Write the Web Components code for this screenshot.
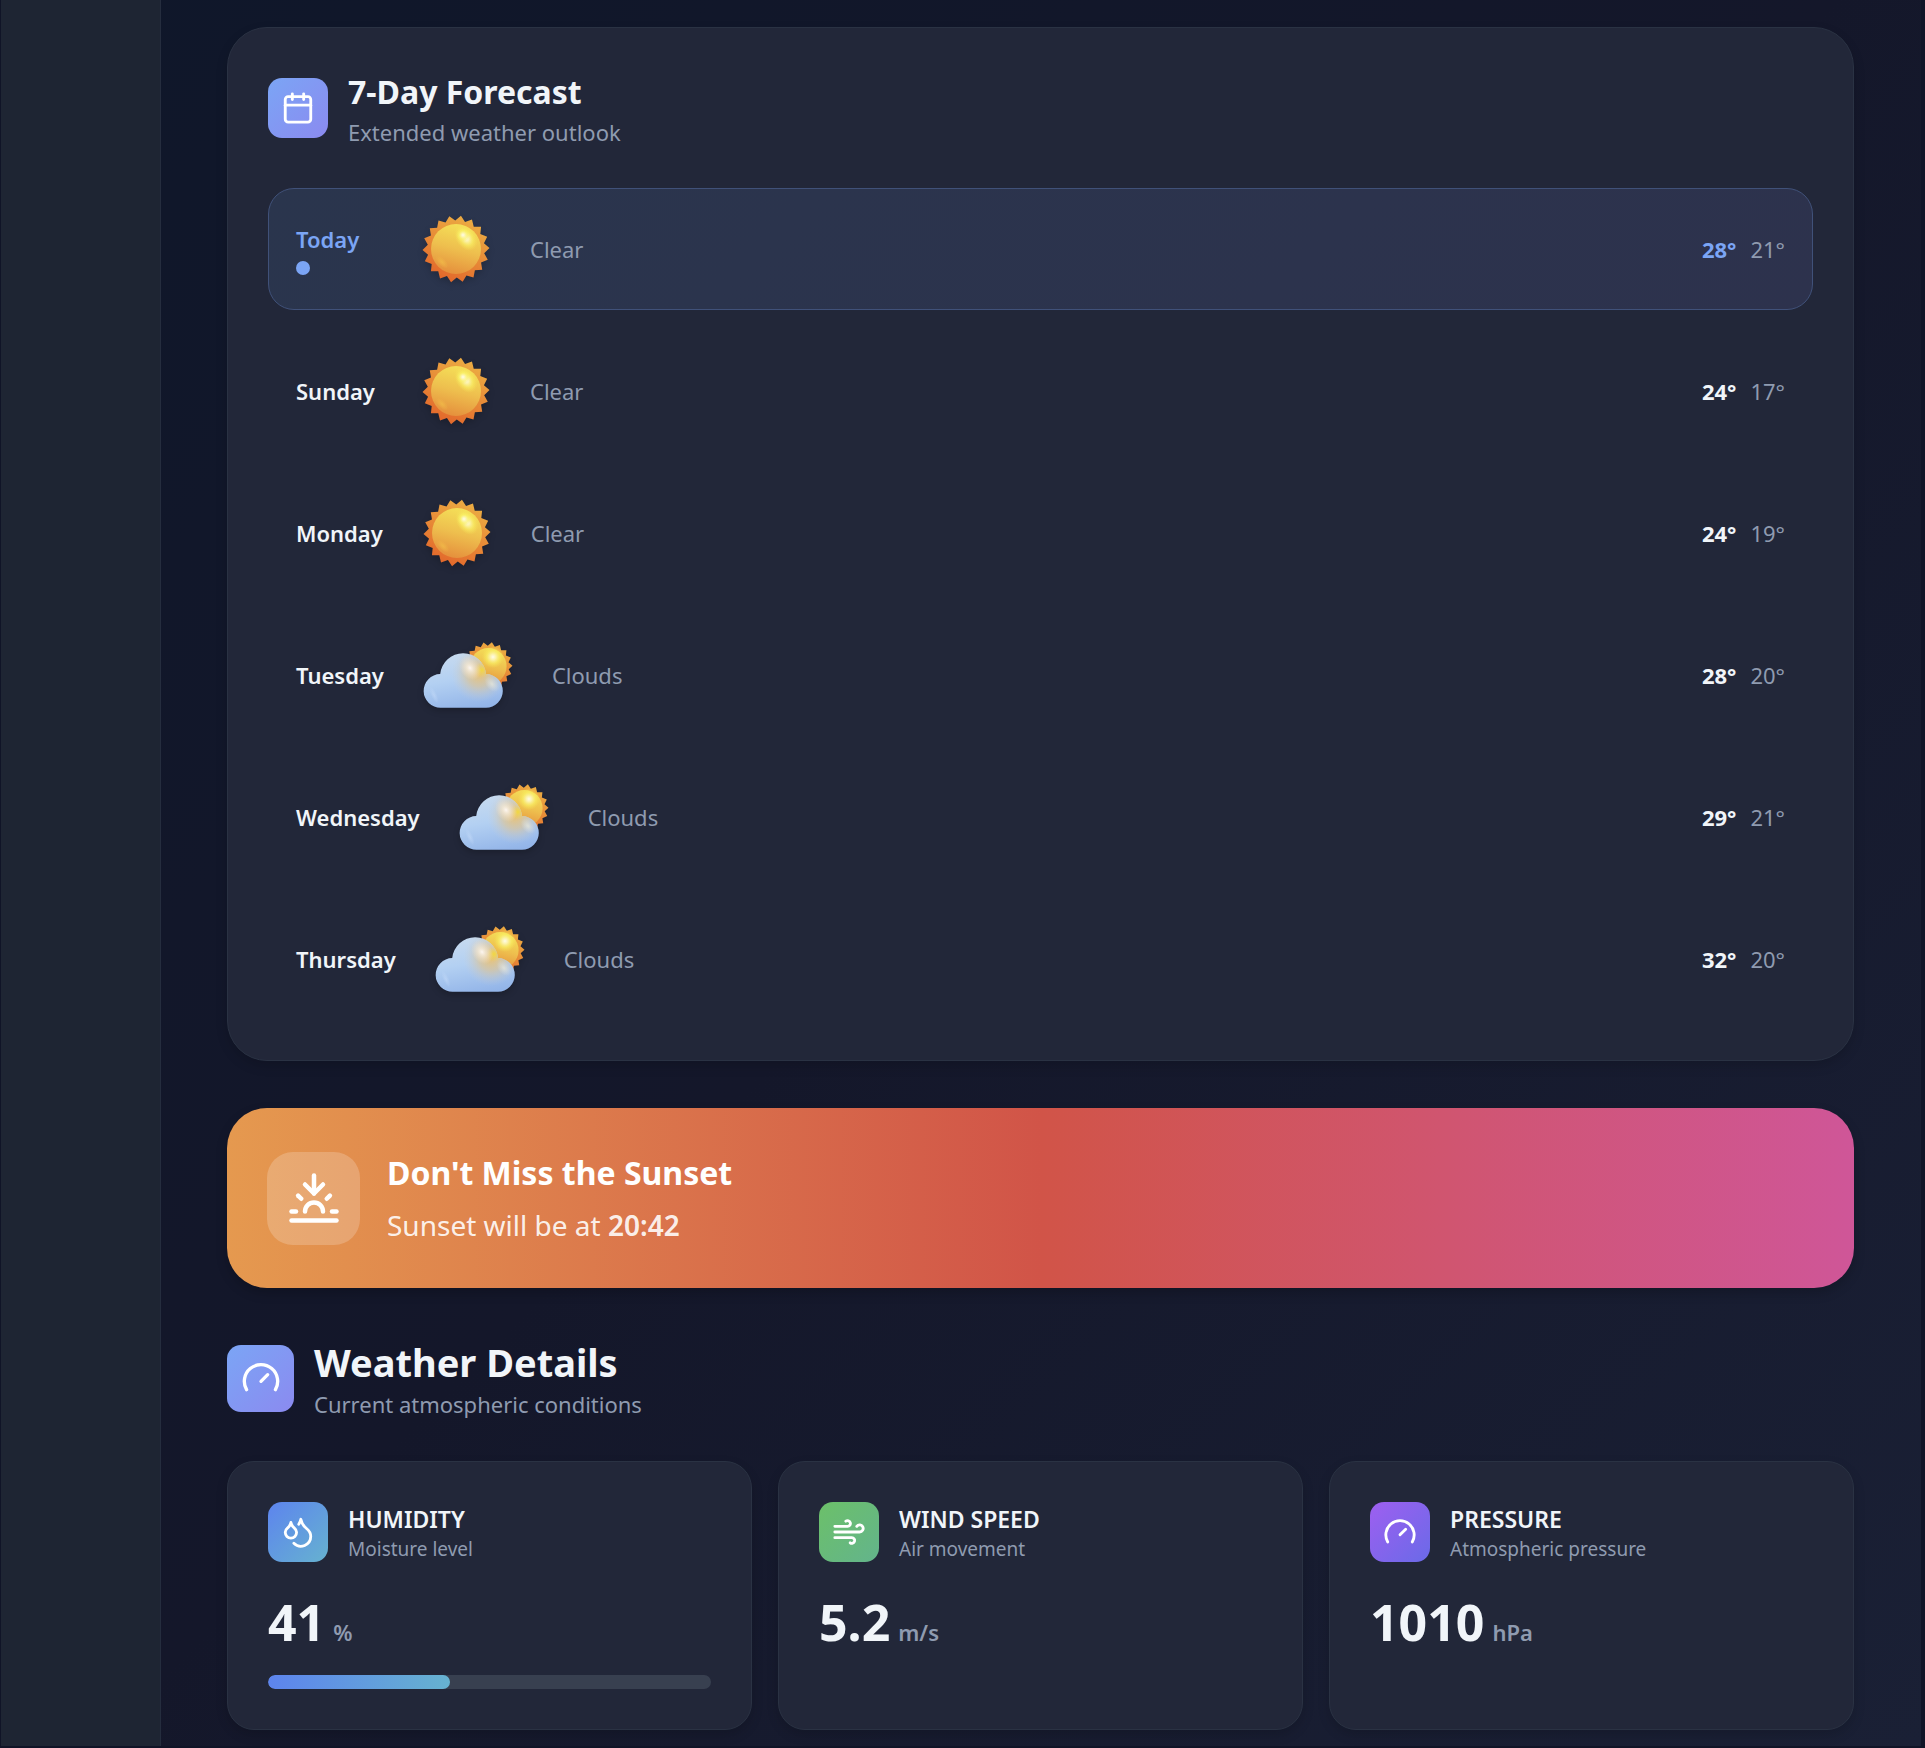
<!DOCTYPE html>
<html lang="en">
<head>
<meta charset="utf-8">
<title>Weather</title>
<style>
  html, body { margin: 0; min-height: 100%; }
  body {
    font-family: "Noto Sans", "Open Sans", sans-serif;
    color: #f1f5f9;
    background: #141829;
  }
</style>
</head>
<body>
<weather-app></weather-app>
<script>
const ICONS = {
  calendar: '<path d="M8 2v4"/><path d="M16 2v4"/><rect width="18" height="18" x="3" y="4" rx="2"/><path d="M3 10h18"/>',
  sunset: '<path d="M12 10V2"/><path d="m4.93 10.93 1.41 1.41"/><path d="M2 18h2"/><path d="M20 18h2"/><path d="m19.07 10.93-1.41 1.41"/><path d="M22 22H2"/><path d="m16 6-4 4-4-4"/><path d="M16 18a4 4 0 0 0-8 0"/>',
  gauge: '<path d="m12 14 4-4"/><path d="M3.34 19a10 10 0 1 1 17.32 0"/>',
  droplets: '<path d="M7 16.3c2.2 0 4-1.83 4-4.05 0-1.16-.57-2.26-1.71-3.19S7.29 6.75 7 5.3c-.29 1.45-1.14 2.84-2.29 3.76S3 11.1 3 12.25c0 2.22 1.8 4.05 4 4.05z"/><path d="M12.56 6.6A10.97 10.97 0 0 0 14 3.02c.5 2.5 2 4.9 4 6.5s3 3.5 3 5.5a6.98 6.98 0 0 1-11.91 4.97"/>',
  wind: '<path d="M12.8 19.6A2 2 0 1 0 14 16H2"/><path d="M17.5 8a2.5 2.5 0 1 1 2 4H2"/><path d="M9.8 4.4A2 2 0 1 1 11 8H2"/>'
};

function define(name, render) {
  customElements.define(name, class extends HTMLElement {
    constructor() {
      super();
      this.attachShadow({ mode: 'open' });
    }
    connectedCallback() {
      this.shadowRoot.innerHTML = render(this);
    }
  });
}

define('line-icon', el => `
  <style>
    :host { display: block; width: var(--glyph, 34px); height: var(--glyph, 34px); }
    svg { display: block; width: 100%; height: 100%; }
  </style>
  <svg viewBox="0 0 24 24" fill="none" stroke="#fff" stroke-width="2" stroke-linecap="round" stroke-linejoin="round" aria-hidden="true">${ICONS[el.getAttribute('name')]}</svg>`);

define('icon-tile', el => `
  <style>
    :host {
      display: flex; align-items: center; justify-content: center; flex: none;
      width: var(--tile, 60px); height: var(--tile, 60px);
      border-radius: var(--tile-radius, 14px);
      background: var(--tile-bg, linear-gradient(135deg, #7ba5f5, #8b8af0));
    }
  </style>
  <line-icon name="${el.getAttribute('name')}"></line-icon>`);

/* Sun outline with eighteen rays, as polygon points. */
function rays(cx, cy, outer, inner) {
  const pts = [];
  for (let i = 0; i < 36; i++) {
    const a = (i * 10 - 1.5) * Math.PI / 180;
    const r = i % 2 ? inner : outer;
    pts.push((cx + r * Math.cos(a)).toFixed(2) + ',' + (cy + r * Math.sin(a)).toFixed(2));
  }
  return pts.join(' ');
}

const SUN_DEFS = `
  <linearGradient id="ray" x1=".75" y1="0" x2=".25" y2="1"><stop offset="0" stop-color="#ecb044"/><stop offset="1" stop-color="#e2642a"/></linearGradient>
  <linearGradient id="disc" x1=".65" y1="0" x2=".4" y2="1"><stop offset="0" stop-color="#f5e158"/><stop offset=".5" stop-color="#eebf4e"/><stop offset="1" stop-color="#e58f3c"/></linearGradient>
  <radialGradient id="gleam"><stop offset="0" stop-color="#fffbe8"/><stop offset=".25" stop-color="#fdf6b8" stop-opacity=".9"/><stop offset=".6" stop-color="#faf267" stop-opacity=".6"/><stop offset="1" stop-color="#f6e85a" stop-opacity="0"/></radialGradient>
  <radialGradient id="spot"><stop offset="0" stop-color="#f0b848" stop-opacity=".9"/><stop offset="1" stop-color="#f0b848" stop-opacity="0"/></radialGradient>`;

const SKY = {
  clear: { w: 92, h: 90, body: `
    <polygon points="${rays(46, 45, 33.5, 28.5)}" fill="url(#ray)"/>
    <circle cx="46" cy="45" r="25" fill="url(#disc)"/>
    <ellipse cx="56" cy="34" rx="10" ry="14" transform="rotate(-35 56 34)" fill="url(#gleam)"/>
    <circle cx="53" cy="31" r="7" fill="url(#gleam)"/>
    <ellipse cx="32" cy="58" rx="4" ry="8" transform="rotate(-45 32 58)" fill="url(#spot)"/>` },
  clouds: { w: 112, h: 90, body: `
    <polygon points="${rays(76.3, 36.3, 24.2, 20.6)}" fill="url(#ray)"/>
    <circle cx="76.3" cy="36.3" r="18.3" fill="url(#disc)"/>
    <circle cx="81" cy="27" r="11" fill="url(#gleam)"/>
    <clipPath id="shape"><path d="M28.700 77.700a16.800 16.800 0 0 1-.5-33.600a23 23 0 0 1 45.800 0a16.800 16.800 0 0 1 0 33.600z"/></clipPath>
    <g clip-path="url(#shape)">
      <rect x="10" y="18" width="84" height="61" fill="url(#vapor)"/>
      <circle cx="67" cy="44" r="28" fill="url(#glow)"/>
      <circle cx="70" cy="40" r="8" fill="url(#yellow)"/>
      <ellipse cx="58" cy="38" rx="10" ry="13" transform="rotate(-35 58 38)" fill="url(#white)"/>
      <ellipse cx="80" cy="54" rx="6" ry="9" transform="rotate(-40 80 54)" fill="url(#white2)"/>
      <ellipse cx="22" cy="65" rx="3" ry="9" transform="rotate(-25 22 65)" fill="url(#haze)"/>
    </g>` }
};

define('sky-icon', el => {
  const s = SKY[el.getAttribute('kind')];
  return `
  <style>
    :host { display: block; flex: none; filter: drop-shadow(0 3px 3px rgba(0,0,0,.2)); }
    svg { display: block; }
  </style>
  <svg width="${s.w}" height="${s.h}" viewBox="0 0 ${s.w} ${s.h}" aria-hidden="true">
    <defs>${SUN_DEFS}
      <linearGradient id="vapor" x1=".35" y1="0" x2=".6" y2="1"><stop offset="0" stop-color="#cbdcee"/><stop offset=".5" stop-color="#b3d0f2"/><stop offset="1" stop-color="#92b4e8"/></linearGradient>
      <radialGradient id="glow"><stop offset="0" stop-color="#ecc06c" stop-opacity=".95"/><stop offset=".45" stop-color="#dfc594" stop-opacity=".65"/><stop offset="1" stop-color="#c8cfd8" stop-opacity="0"/></radialGradient>
      <radialGradient id="yellow"><stop offset="0" stop-color="#f2d840"/><stop offset="1" stop-color="#f0d060" stop-opacity="0"/></radialGradient>
      <radialGradient id="white"><stop offset="0" stop-color="#fdf6f0"/><stop offset=".3" stop-color="#f5ead8" stop-opacity=".8"/><stop offset="1" stop-color="#f0e0c8" stop-opacity="0"/></radialGradient>
      <radialGradient id="white2"><stop offset="0" stop-color="#e4e6dc" stop-opacity=".8"/><stop offset="1" stop-color="#d8e0e8" stop-opacity="0"/></radialGradient>
      <radialGradient id="haze"><stop offset="0" stop-color="#c4daf8" stop-opacity=".6"/><stop offset="1" stop-color="#c4daf8" stop-opacity="0"/></radialGradient>
    </defs>${s.body}
  </svg>`;
});

define('section-heading', el => `
  <style>
    :host { display: flex; align-items: center; gap: 20px; }
    h2, p { margin: 0; }
    h2 { font-size: var(--title, 32px); line-height: var(--title-line, 48px); font-weight: 700; }
    p { font-size: 22px; line-height: 32px; color: #8f9bb0; }
  </style>
  <icon-tile name="${el.getAttribute('icon')}"></icon-tile>
  <div><h2><slot></slot></h2><p><slot name="note"></slot></p></div>`);

define('forecast-row', el => {
  const today = el.hasAttribute('today');
  return `
  <style>
    :host {
      display: flex; align-items: center; gap: 28px; padding: 15px 27px;
      border: 1px solid transparent; border-radius: 26px; color: #f1f5f9;
    }
    :host([today]) {
      background: linear-gradient(135deg, #2a354d, #2d324d);
      border-color: #405179; color: #7ba5f5;
    }
    .day, .sky, .temps { font-size: 22px; line-height: 32px; }
    .day { min-width: 86px; font-weight: 600; }
    .dot { width: 14px; height: 14px; margin-top: 6px; border-radius: 50%; background: #7ba5f5; }
    .sky { flex: 1; color: #8f9bb0; }
    .temps { display: flex; gap: 14px; }
    .high { font-weight: 700; }
    .low { color: #8f9bb0; }
  </style>
  <div class="day">${el.getAttribute('day')}${today ? '<div class="dot"></div>' : ''}</div>
  <sky-icon kind="${el.getAttribute('sky').toLowerCase()}"></sky-icon>
  <div class="sky">${el.getAttribute('sky')}</div>
  <div class="temps"><span class="high">${el.getAttribute('high')}°</span><span class="low">${el.getAttribute('low')}°</span></div>`;
});

define('forecast-card', () => `
  <style>
    :host {
      display: block; padding: 40px; border: 1px solid #2a3243; border-radius: 40px;
      background: #222739; box-shadow: 0 5px 12px rgba(0,0,0,.15);
    }
    .rows { display: flex; flex-direction: column; gap: 20px; margin-top: 40px; }
  </style>
  <section-heading icon="calendar">7-Day Forecast<span slot="note">Extended weather outlook</span></section-heading>
  <div class="rows"><slot></slot></div>`);

define('sunset-banner', el => `
  <style>
    :host {
      display: flex; align-items: center; gap: 27px; padding: 40px;
      border-radius: 40px; box-shadow: 0 5px 12px rgba(0,0,0,.2);
      background: linear-gradient(90deg, #e5994f, #d15448 50%, #cf5698);
    }
    icon-tile { --tile: 93px; --tile-radius: 26px; --glyph: 54px; --tile-bg: rgba(255,255,255,.2); }
    h2, p { margin: 0; }
    h2 { font-size: 32px; line-height: 50px; font-weight: 700; color: #fff; }
    p { margin-top: 4px; font-size: 28px; line-height: 46px; color: rgba(255,255,255,.9); }
    strong { font-weight: 600; }
  </style>
  <icon-tile name="sunset"></icon-tile>
  <div><h2>Don't Miss the Sunset</h2><p>Sunset will be at <strong>${el.getAttribute('time')}</strong></p></div>`);

define('metric-card', el => `
  <style>
    :host {
      display: block; padding: 40px; border: 1px solid #2a3243; border-radius: 27px;
      background: #222739; box-shadow: 0 5px 12px rgba(0,0,0,.15);
    }
    header { display: flex; align-items: center; gap: 20px; }
    h3, p { margin: 0; }
    h3 { font-size: 23px; line-height: 34px; font-weight: 600; text-transform: uppercase; }
    header p { font-size: 19px; line-height: 26px; color: #8f9bb0; }
    .value { display: flex; align-items: baseline; gap: 8px; margin-top: 28px; font-size: 50px; line-height: 64px; font-weight: 700; }
    .unit { font-size: 22px; line-height: 32px; font-weight: 600; color: #8f9bb0; }
  </style>
  <header><icon-tile name="${el.getAttribute('icon')}"></icon-tile>
    <div><h3>${el.getAttribute('label')}</h3><p>${el.getAttribute('note')}</p></div></header>
  <div class="value"><span>${el.getAttribute('value')}</span><span class="unit">${el.getAttribute('unit')}</span></div>
  <slot></slot>`);

define('level-bar', el => `
  <style>
    :host { display: block; height: 14px; margin-top: 21px; border-radius: 7px; background: #384050; overflow: hidden; }
    div { height: 100%; border-radius: 7px; background: linear-gradient(90deg, #5d84ee, #66b2d0); }
  </style>
  <div style="width:${el.getAttribute('value')}%"></div>`);

define('weather-app', () => `
  <style>
    :host {
      display: flex; min-height: 100vh; box-sizing: border-box;
      border: solid #101427; border-width: 0 4px 2px 1px;
      background: linear-gradient(135deg, #0f172a, #14172a 50%, #1a2035);
    }
    nav { flex: none; width: 159px; border-right: 1px solid #252d3e; background: #1e2533; }
    main { flex: 1; min-width: 0; padding: 27px 67px 16px 66px; }
    sunset-banner { margin-top: 47px; }
    .details {
      margin: 48px 0 41px;
      --title: 38px; --title-line: 52px; --tile: 67px; --glyph: 40px;
    }
    .grid { display: grid; grid-template-columns: repeat(3, 1fr); gap: 26px; }
    .humidity { --tile-bg: linear-gradient(135deg, #5d84ee, #66b2d0); }
    .wind { --tile-bg: linear-gradient(135deg, #6cc069, #63b48c); }
    .pressure { --tile-bg: linear-gradient(135deg, #9e5ff0, #6a6ae8); }
  </style>
  <nav aria-label="Main"></nav>
  <main>
    <forecast-card>
      <forecast-row today day="Today" sky="Clear" high="28" low="21"></forecast-row>
      <forecast-row day="Sunday" sky="Clear" high="24" low="17"></forecast-row>
      <forecast-row day="Monday" sky="Clear" high="24" low="19"></forecast-row>
      <forecast-row day="Tuesday" sky="Clouds" high="28" low="20"></forecast-row>
      <forecast-row day="Wednesday" sky="Clouds" high="29" low="21"></forecast-row>
      <forecast-row day="Thursday" sky="Clouds" high="32" low="20"></forecast-row>
    </forecast-card>
    <sunset-banner time="20:42"></sunset-banner>
    <section-heading class="details" icon="gauge">Weather Details<span slot="note">Current atmospheric conditions</span></section-heading>
    <div class="grid">
      <metric-card class="humidity" icon="droplets" label="Humidity" note="Moisture level" value="41" unit="%"><level-bar value="41"></level-bar></metric-card>
      <metric-card class="wind" icon="wind" label="Wind Speed" note="Air movement" value="5.2" unit="m/s"></metric-card>
      <metric-card class="pressure" icon="gauge" label="Pressure" note="Atmospheric pressure" value="1010" unit="hPa"></metric-card>
    </div>
  </main>`);
</script>
</body>
</html>
